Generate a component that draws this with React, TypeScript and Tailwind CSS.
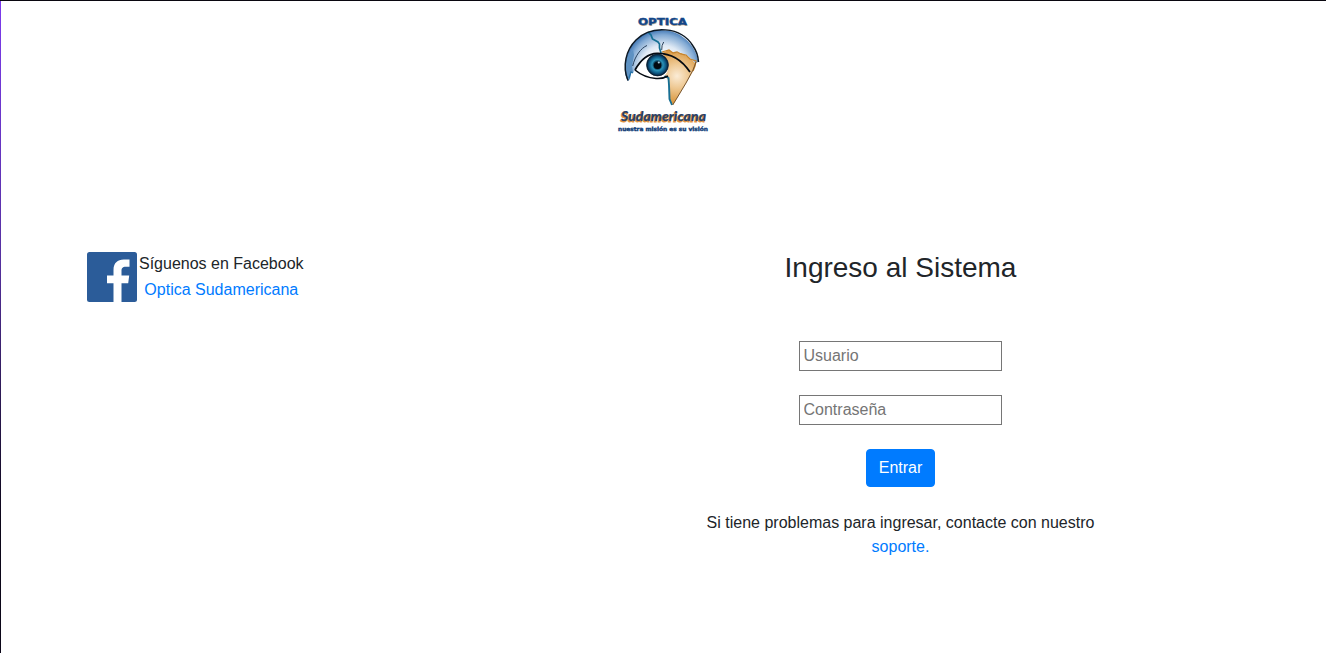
import React from "react";

function Logo() {
  return (
    <svg width="100" height="125" viewBox="612 12 100 125" className="overflow-visible" role="img" aria-label="Optica Sudamericana">
      <defs>
        <radialGradient id="globe" gradientUnits="userSpaceOnUse" cx="663" cy="68" r="39">
          <stop offset="0.3" stopColor="#ffffff" />
          <stop offset="0.58" stopColor="#dfe9f4" />
          <stop offset="0.85" stopColor="#82aad4" />
          <stop offset="1" stopColor="#3a72b2" />
        </radialGradient>
        <radialGradient id="land" gradientUnits="userSpaceOnUse" cx="677" cy="76" r="27">
          <stop offset="0" stopColor="#fbecd6" />
          <stop offset="0.45" stopColor="#eec892" />
          <stop offset="1" stopColor="#d9973f" />
        </radialGradient>
        <radialGradient id="iris">
          <stop offset="0" stopColor="#02121f" />
          <stop offset="0.3" stopColor="#04233a" />
          <stop offset="0.5" stopColor="#2a93b8" />
          <stop offset="0.75" stopColor="#0f5c88" />
          <stop offset="1" stopColor="#041c35" />
        </radialGradient>
      </defs>
      <text x="638.7" y="25.6" textLength="49" lengthAdjust="spacingAndGlyphs" fontFamily="'DejaVu Sans', sans-serif" fontWeight="700" fontSize="8.8" fill="#c9b394">OPTICA</text>
      <text x="638" y="25" textLength="49" lengthAdjust="spacingAndGlyphs" fontFamily="'DejaVu Sans', sans-serif" fontWeight="700" fontSize="8.8" fill="#12468a" stroke="#12468a" strokeWidth="0.4">OPTICA</text>
      <path d="M628 81C623 73 624 58 631 47C638 36 648 30 660 30C680 30 695 43 698.5 62L695 63C690 57 686 54 681 53L673 53L669 50L662 53C650 53 641 60 635 70L633 73L631 72L628 81Z" fill="url(#globe)" />
      <path d="M628 81C624 75 624.5 65 628 56L633 50L634 55L632 66L633 72L631 73L630 79Z" fill="#5d91c2" />
      <path d="M629 78L631 72L633 73" fill="none" stroke="#2371a6" strokeWidth="1.3" />
      <path d="M662 53L669 50L673 53L681 53L690 58L695 63C695 68 693 72 688 80L673 105L670 100L669 82L665 75C668 72 669 68 668 61Z" fill="url(#land)" />
      <path d="M662 52L669 50L673 53L677 52L681 54L686 55L690 59L696 61L695 66L693 71" fill="none" stroke="#c5842f" strokeWidth="1.3" />
      <path d="M664.5 76L668.5 78L669 85L669.5 99L672 105" fill="none" stroke="#176f94" strokeWidth="1.9" />
      <path d="M672.7 105L677 98L686 83L693 70L696 62" fill="none" stroke="#6b4a25" strokeWidth="0.9" />
      <path d="M648 32L651 35L652.5 39L658 42L659.5 44L659.5 48L661 53" fill="none" stroke="#156f93" strokeWidth="1.7" />
      <path d="M628 80.5C622 66 626 50 636 40C651 25 681 26 693 46Q698 53 698.5 62" fill="none" stroke="#0c1824" strokeWidth="1.5" />
      <path d="M632.7 66C635 56 641 48 647 45.5M661.7 50Q661.5 45 663.7 42" fill="none" stroke="#17304c" strokeWidth="0.9" />
      <path d="M635 70C641 59 649 53.5 657 53.3C672 53 682 60 690 72" fill="none" stroke="#050b12" strokeWidth="1.8" />
      <path d="M635 70Q644 77.5 656 78.5Q663 79 668 76" fill="none" stroke="#050b12" strokeWidth="1.6" />
      <circle cx="657.5" cy="65" r="10.9" fill="url(#iris)" stroke="#061c2d" strokeWidth="0.8" />
      <circle cx="657.5" cy="65.5" r="3.6" fill="#020910" />
      <circle cx="658.8" cy="62.5" r="1.1" fill="#a9cfe0" />
      <text x="620.4" y="121.8" textLength="85" lengthAdjust="spacingAndGlyphs" fontFamily="Lato, sans-serif" fontWeight="900" fontStyle="italic" fontSize="14" fill="#d5862e" stroke="#dc9347" strokeWidth="0.9">Sudamericana</text>
      <text x="621" y="121.2" textLength="85" lengthAdjust="spacingAndGlyphs" fontFamily="Lato, sans-serif" fontWeight="900" fontStyle="italic" fontSize="14" fill="#294268" stroke="#294268" strokeWidth="0.1">Sudamericana</text>
      <text x="618" y="131" textLength="90" lengthAdjust="spacingAndGlyphs" fontFamily="'DejaVu Sans', sans-serif" fontWeight="700" fontSize="5.6" fill="#123e78" stroke="#123e78" strokeWidth="0.4">nuestra misión es su visión</text>
    </svg>
  );
}

function FacebookIcon() {
  return (
    <svg width="50" height="50" viewBox="0 0 50 50" className="shrink-0" aria-hidden="true">
      <rect width="50" height="50" rx="2.5" fill="#2b5c99" />
      <path d="M26.5 50V31.2H20V23.5H26.5V18C26.5 11 30.5 7.5 36.8 7.5H42.5V14.7H38.8C35.3 14.7 34.5 16.3 34.5 19V23.5H42.2L41.2 31.2H34.5V50Z" fill="#fff" />
    </svg>
  );
}

export default function App() {
  return (
    <div className="flex h-[653px] w-full border-t border-[#09070f] bg-white font-['Liberation_Sans',Arial,sans-serif] text-base leading-6 text-[#212529]">
      <div className="w-px shrink-0 bg-linear-to-b from-[#7c3aed] from-0% via-[#55309f] via-40% to-[#0b0618] to-80%" />
      <div className="min-w-0 grow">
        <header className="flex h-[251px] justify-center pt-[11px] pr-[3px]">
          <Logo />
        </header>
        <main className="flex">
          <section className="flex w-[474px] shrink-0 items-start pl-[86px]">
            <FacebookIcon />
            <div className="pl-[2px] text-center whitespace-nowrap">
              <p>Síguenos en Facebook</p>
              <a href="#" className="mt-[2px] block text-[#007bff]">Optica Sudamericana</a>
            </div>
          </section>
          <section className="flex w-[851px] flex-col items-center">
            <h1 className="text-[28px] leading-[31px] font-normal">Ingreso al Sistema</h1>
            <form className="mt-[58px] flex flex-col items-center" onSubmit={(e) => e.preventDefault()}>
              <input aria-label="Usuario" placeholder="Usuario" className="h-[30px] w-[203px] border border-[#767676] px-[3.5px] placeholder:text-[#757575]" />
              <input type="password" aria-label="Contraseña" placeholder="Contraseña" className="mt-6 h-[30px] w-[203px] border border-[#767676] px-[3.5px] placeholder:text-[#757575]" />
              <button className="mt-6 h-[38px] rounded border border-[#007bff] bg-[#007bff] px-3 text-white">Entrar</button>
            </form>
            <p className="mt-6 w-[400px] text-center">
              Si tiene problemas para ingresar, contacte con nuestro <a href="#" className="text-[#007bff]">soporte.</a>
            </p>
          </section>
        </main>
      </div>
    </div>
  );
}
